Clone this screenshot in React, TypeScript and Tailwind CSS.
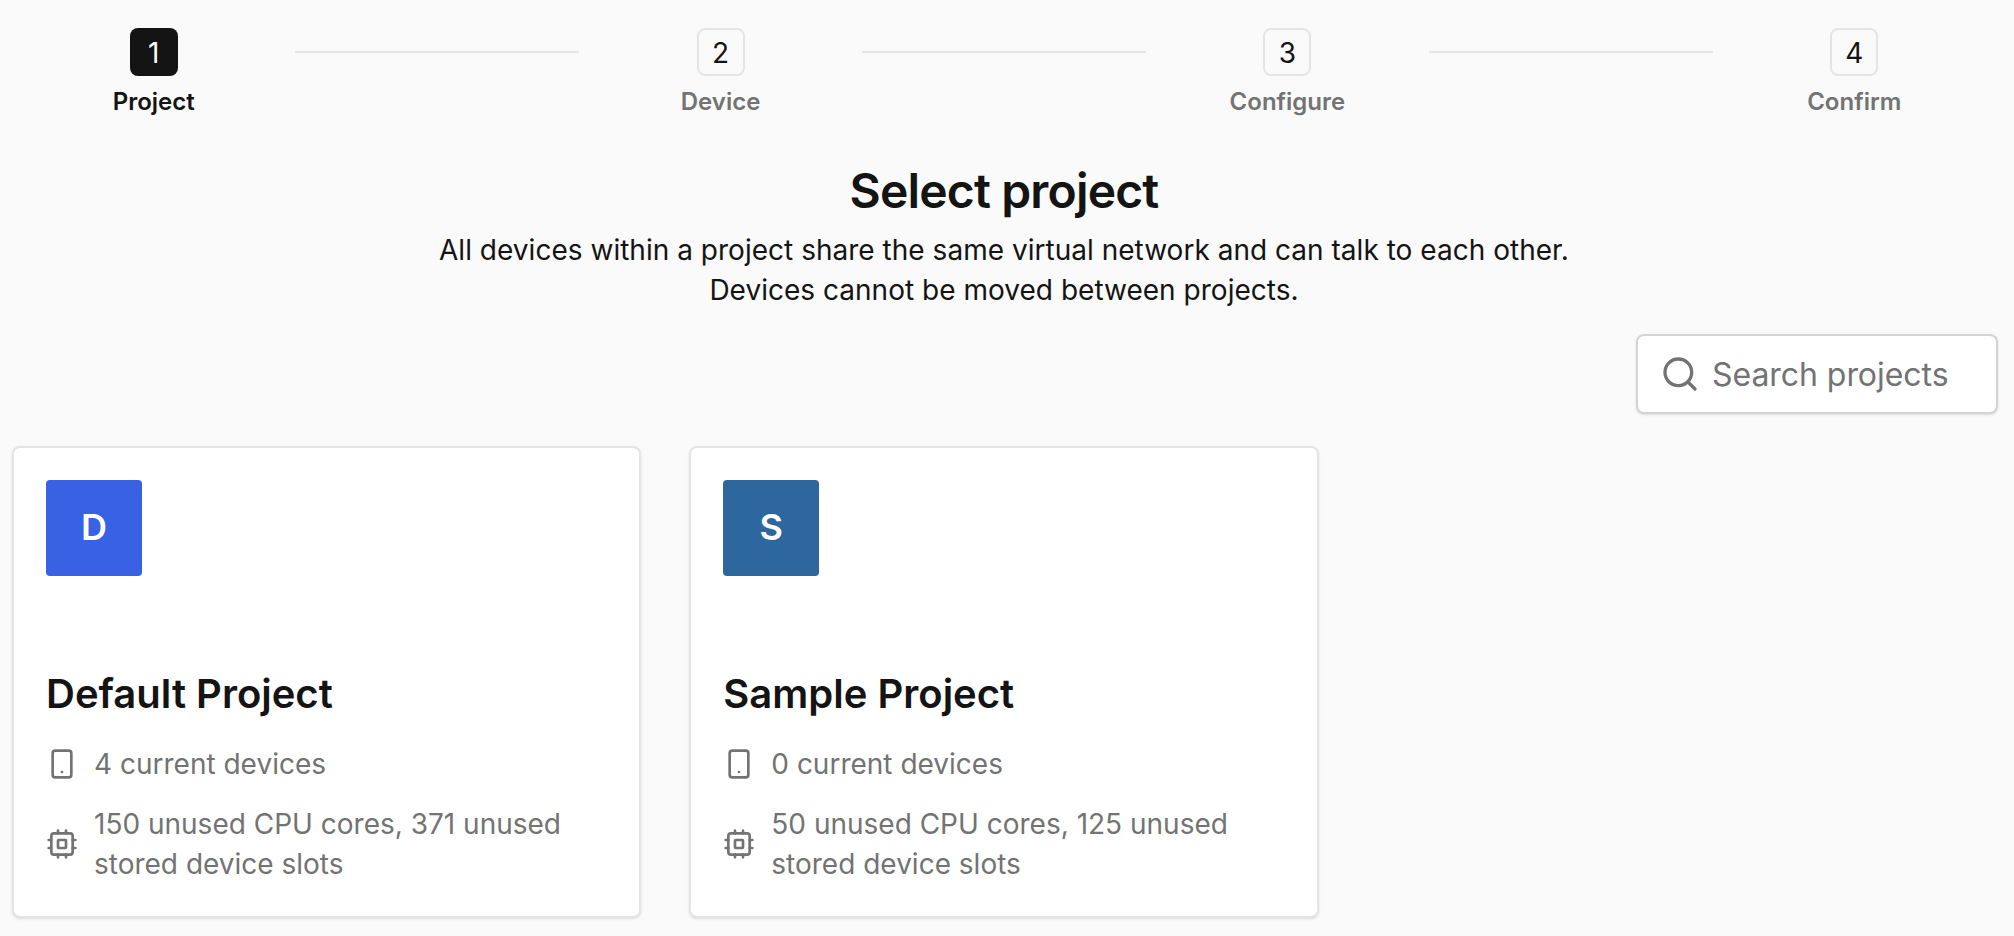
import { Search, Smartphone } from "lucide-react"

const steps = ["Project", "Device", "Configure", "Confirm"]

const projects = [
  { name: "Default Project", initial: "D", color: "bg-[#3861e3]", devices: 4, cores: 150, slots: 371 },
  { name: "Sample Project", initial: "S", color: "bg-[#2d679e]", devices: 0, cores: 50, slots: 125 },
]

function CpuIcon() {
  return (
    <svg
      className="h-8 w-8 shrink-0"
      viewBox="0 0 24 24"
      fill="none"
      stroke="currentColor"
      strokeWidth="2"
      strokeLinecap="round"
      strokeLinejoin="round"
    >
      <rect x="4" y="4" width="16" height="16" rx="2" />
      <rect x="9" y="9" width="6" height="6" rx="0.5" />
      <path d="M9 2v2M15 2v2M9 20v2M15 20v2M2 9h2M2 15h2M20 9h2M20 15h2" />
    </svg>
  )
}

export default function App() {
  return (
    <div className="h-[936px] overflow-hidden bg-[#fafafa] font-['Inter',sans-serif] text-[#141414]">
      <div className="w-[2008px] px-3">
        {/* Stepper */}
        <nav className="flex h-[120px] items-start pt-7">
          {steps.map((step, i) => (
            <div key={step} className="contents">
              {i > 0 && <div className="mt-[23px] h-0.5 flex-1 bg-[#e5e5e5]" />}
              <div className="flex min-w-0 flex-1 flex-col items-center">
                <div
                  className={`flex h-12 w-12 items-center justify-center rounded-lg pt-0.5 text-[28px] ${
                    i === 0 ? "bg-[#141414] text-white" : "border-2 border-[#e5e5e5]"
                  }`}
                >
                  {i + 1}
                </div>
                <span className={`mt-2.5 text-2xl font-semibold ${i === 0 ? "" : "text-[#737373]"}`}>{step}</span>
              </div>
            </div>
          ))}
        </nav>

        {/* Heading */}
        <header className="pt-[46px] text-center">
          <h1 className="text-5xl leading-[50px] font-semibold tracking-[-0.84px]">Select project</h1>
          <p className="mt-3.5 text-[28px] leading-10 tracking-[0.02px]">
            All devices within a project share the same virtual network and can talk to each other.
            <br />
            Devices cannot be moved between projects.
          </p>
        </header>

        {/* Search */}
        <div className="-mr-0.5 mt-6 flex justify-end">
          <label className="flex h-20 w-[362px] items-center gap-3 rounded-lg border-2 border-[#d4d4d4] bg-white px-[22px] shadow-sm">
            <Search className="h-10 w-10 shrink-0 text-[#737373]" />
            <input
              className="w-full min-w-0 pt-0.5 text-[32px] tracking-[-0.05px] outline-none placeholder:text-[#737373]"
              placeholder="Search projects"
            />
          </label>
        </div>

        {/* Projects */}
        <main className="mt-8 grid grid-cols-3 gap-12">
          {projects.map((p) => (
            <div key={p.name} className="h-[472px] rounded-lg border-2 border-[#e5e5e5] bg-white p-8 shadow-sm">
              <div
                className={`flex h-24 w-24 items-center justify-center rounded pb-0.5 text-4xl font-semibold text-white ${p.color}`}
              >
                {p.initial}
              </div>
              <h2 className="mt-[93px] text-[40px] leading-[50px] font-semibold">{p.name}</h2>
              <div className="mt-[25px] flex items-center gap-4 text-[28px] leading-10 text-[#737373]">
                <Smartphone className="h-8 w-8 shrink-0" />
                {p.devices} current devices
              </div>
              <div className="mt-5 flex items-center gap-4 text-[28px] leading-10 text-[#737373]">
                <CpuIcon />
                <span>
                  {p.cores} unused CPU cores, {p.slots} unused
                  <br />
                  stored device slots
                </span>
              </div>
            </div>
          ))}
        </main>
      </div>
    </div>
  )
}
